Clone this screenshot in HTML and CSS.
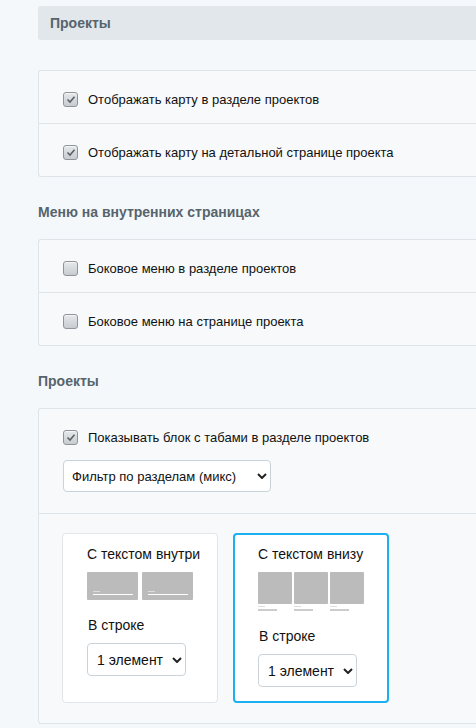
FILE: index.html
```html
<!DOCTYPE html>
<html>
<head>
  <meta charset="utf-8">
  <title>Проекты</title>
  <link rel="stylesheet" href="styles.css">
</head>
<body>
  <div class="page">
    <div class="title-bar">Проекты</div>

    <div class="box">
      <div class="row">
        <label class="check"><span class="cb on"><svg width="10" height="9" viewBox="0 0 10 9"><path d="M1.5 4.5 L4 7 L8.5 1.8" fill="none" stroke="#5c6166" stroke-width="1.6"/></svg></span>Отображать карту в разделе проектов</label>
      </div>
      <div class="row">
        <label class="check"><span class="cb on"><svg width="10" height="9" viewBox="0 0 10 9"><path d="M1.5 4.5 L4 7 L8.5 1.8" fill="none" stroke="#5c6166" stroke-width="1.6"/></svg></span>Отображать карту на детальной странице проекта</label>
      </div>
    </div>

    <h3 class="sub">Меню на внутренних страницах</h3>
    <div class="box">
      <div class="row">
        <label class="check"><span class="cb"></span>Боковое меню в разделе проектов</label>
      </div>
      <div class="row">
        <label class="check"><span class="cb"></span>Боковое меню на странице проекта</label>
      </div>
    </div>

    <h3 class="sub">Проекты</h3>
    <div class="box">
      <div class="row row-tabs">
        <label class="check"><span class="cb on"><svg width="10" height="9" viewBox="0 0 10 9"><path d="M1.5 4.5 L4 7 L8.5 1.8" fill="none" stroke="#5c6166" stroke-width="1.6"/></svg></span>Показывать блок с табами в разделе проектов</label>
        <div class="sel sel-wide">
          <select><option>Фильтр по разделам (микс)</option></select>
          <svg class="arrow" width="10" height="6" viewBox="0 0 10 6"><path d="M1 1 L5 5 L9 1" fill="none" stroke="#222" stroke-width="2"/></svg>
        </div>
      </div>
      <div class="row row-cards">
        <div class="card">
          <div class="card-in">
            <div class="card-title">С текстом внутри</div>
            <div class="thumbs">
              <div class="t-in"><i class="ln-s"></i><i class="ln-l"></i></div>
              <div class="t-in"><i class="ln-s"></i><i class="ln-l"></i></div>
            </div>
            <div class="card-label">В строке</div>
            <div class="sel sel-small">
              <select><option>1 элемент</option></select>
              <svg class="arrow" width="10" height="6" viewBox="0 0 10 6"><path d="M1 1 L5 5 L9 1" fill="none" stroke="#222" stroke-width="2"/></svg>
            </div>
          </div>
        </div>
        <div class="card active">
          <div class="card-in">
            <div class="card-title">С текстом внизу</div>
            <div class="thumbs">
              <div class="t-out"><div class="sq"></div><i class="ln-s"></i><i class="ln-l"></i></div>
              <div class="t-out"><div class="sq"></div><i class="ln-s"></i><i class="ln-l"></i></div>
              <div class="t-out"><div class="sq"></div><i class="ln-s"></i><i class="ln-l"></i></div>
            </div>
            <div class="card-label">В строке</div>
            <div class="sel sel-small">
              <select><option>1 элемент</option></select>
              <svg class="arrow" width="10" height="6" viewBox="0 0 10 6"><path d="M1 1 L5 5 L9 1" fill="none" stroke="#222" stroke-width="2"/></svg>
            </div>
          </div>
        </div>
      </div>
    </div>
  </div>
</body>
</html>
```

FILE: styles.css
```css
body {
    margin: 0 ;
    background-color: #f5f8fa ;
    font-family: "Liberation Sans", Arial, sans-serif ;
    overflow: hidden ;
}
.page {
    padding: 6px 0 0 38px ;
    width: 438px ;
}
.title-bar {
    background-color: #e1e7ea ;
    border-radius: 3px 0 0 3px ;
    height: 34px ;
    line-height: 34px ;
    padding-left: 12px ;
    font-size: 14px ;
    font-weight: bold ;
    color: #56646d ;
}
.box {
    margin-top: 30px ;
    border: 1px solid #dde5eb ;
    border-right: none ;
    border-radius: 3px 0 0 3px ;
    background-color: #f7f9fa ;
}
.sub {
    margin: 26px 0 18px 0 ;
    font-size: 14px ;
    line-height: 18px ;
    color: #56646d ;
}
.sub + .box {
    margin-top: 0 ;
}
.row {
    padding: 19px 24px 15px 24px ;
}
.row + .row {
    border-top: 1px solid #dde5eb ;
}
.check {
    display: flex ;
    align-items: center ;
    height: 18px ;
    font-size: 13px ;
    color: #111 ;
}
.cb {
    box-sizing: border-box ;
    width: 15px ;
    height: 15px ;
    margin-right: 10px ;
    border: 1px solid #8e949a ;
    border-radius: 3px ;
    background: linear-gradient(#e6e8ea, #c8ccd0) ;
    box-shadow: inset 0 1px 0 #f4f5f6 ;
    display: flex ;
    align-items: center ;
    justify-content: center ;
}
.row-tabs {
    padding-bottom: 21px ;
}
.sel {
    position: relative ;
    display: block ;
}
.sel select {
    appearance: none ;
    -webkit-appearance: none ;
    box-sizing: border-box ;
    width: 100% ;
    height: 100% ;
    background-color: #fff ;
    border: 1px solid #cbd3d9 ;
    border-radius: 4px ;
    font-family: "Liberation Sans", Arial, sans-serif ;
    color: #111 ;
    padding: 0 0 0 8px ;
    margin: 0 ;
}
.sel .arrow {
    position: absolute ;
    top: 50% ;
    margin-top: -3px ;
    right: 4px ;
}
.sel-wide {
    margin-top: 14px ;
    width: 208px ;
    height: 32px ;
}
.sel-wide select {
    font-size: 13px ;
}
.sel-small {
    margin-top: 9px ;
    width: 99px ;
    height: 33px ;
}
.sel-small select {
    font-size: 14px ;
    padding-left: 9px ;
}
.row-cards {
    display: flex ;
    align-items: stretch ;
    gap: 15px ;
    padding: 19px 23px 20px 23px ;
}
.card {
    box-sizing: border-box ;
    width: 156px ;
    background-color: #fff ;
    border: 1px solid #e0e6ea ;
    border-radius: 4px ;
    padding: 10px 0 14px 0 ;
}
.card.active {
    border: 2px solid #1db0f0 ;
    padding-top: 9px ;
}
.card-in {
    width: 106px ;
    margin: 0 auto ;
}
.card-title {
    font-size: 14px ;
    line-height: 20px ;
    color: #111 ;
    text-align: center ;
    white-space: nowrap ;
}
.card.active .card-title {
    text-align: left ;
}
.thumbs {
    display: flex ;
    justify-content: space-between ;
    margin-top: 8px ;
}
.t-in {
    width: 51px ;
    height: 28px ;
    background-color: #bbb ;
    border-radius: 1px ;
    display: flex ;
    flex-direction: column ;
    justify-content: flex-end ;
    padding: 0 0 5px 6px ;
    box-sizing: border-box ;
}
.t-in .ln-s {
    display: block ;
    width: 7px ;
    height: 1px ;
    background-color: #ddd ;
    margin-bottom: 2px ;
}
.t-in .ln-l {
    display: block ;
    width: 40px ;
    height: 1px ;
    background-color: #fff ;
}
.t-out {
    width: 34px ;
}
.t-out .sq {
    height: 32px ;
    background-color: #bbb ;
    border-radius: 1px ;
}
.t-out .ln-s {
    display: block ;
    width: 7px ;
    height: 1px ;
    background-color: #ddd ;
    margin-top: 2px ;
}
.t-out .ln-l {
    display: block ;
    width: 19px ;
    height: 2px ;
    background-color: #ccc ;
    margin-top: 2px ;
}
.card-label {
    margin-top: 16px ;
    font-size: 14px ;
    line-height: 18px ;
    color: #111 ;
    padding-left: 1px ;
}
```
